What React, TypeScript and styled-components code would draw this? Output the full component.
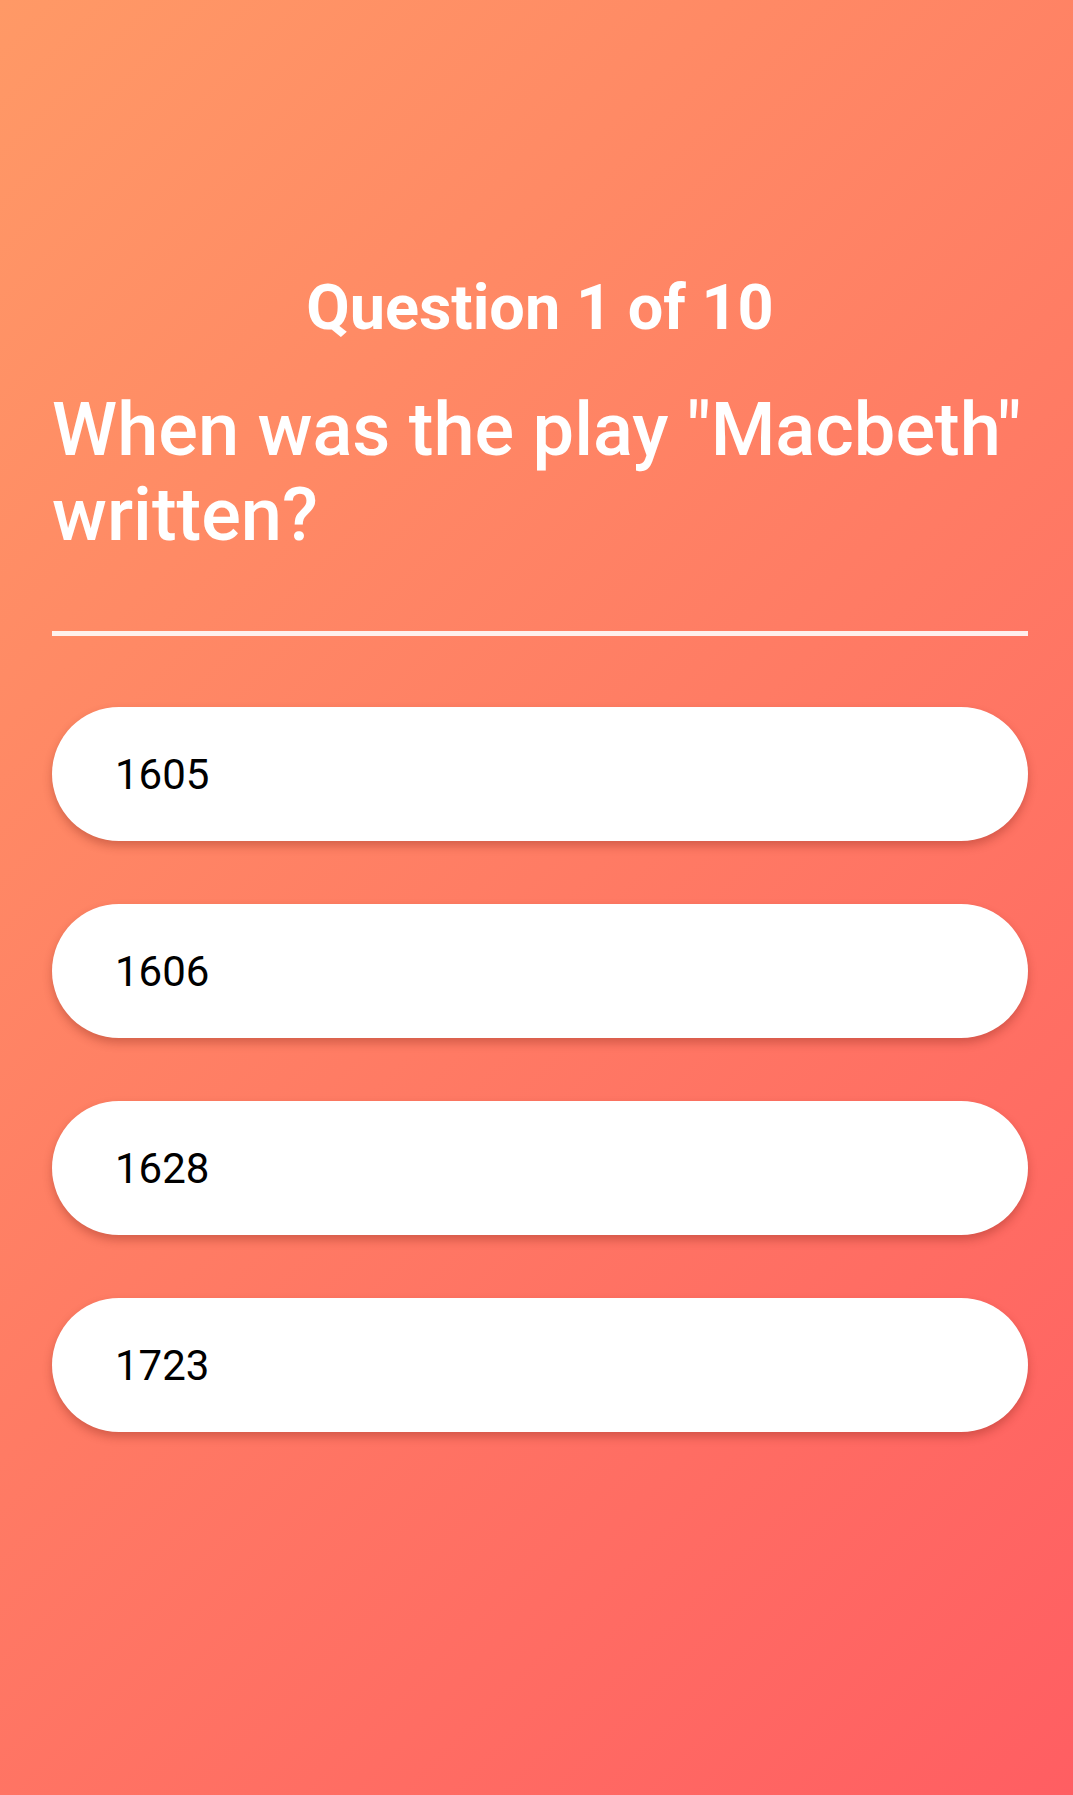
import React from "react";
import styled, { createGlobalStyle } from "styled-components";

const GlobalStyle = createGlobalStyle`
  html, body {
    margin: 0;
    padding: 0;
  }
  body {
    font-family: Roboto, "Liberation Sans", Arial, sans-serif;
    -webkit-font-smoothing: antialiased;
  }
  * { box-sizing: border-box; }
`;

const Screen = styled.main`
  min-height: 1795px;
  width: 100%;
  background: linear-gradient(135deg, #ff9966 0%, #ff5e62 100%);
  padding: 270px 45px 0 52px;
  display: flex;
  flex-direction: column;
`;

const Counter = styled.h2`
  margin: 0;
  font-family: Roboto, "Liberation Sans", sans-serif;
  font-weight: 700;
  font-size: 63px;
  line-height: 76px;
  color: #ffffff;
  text-align: center;
`;

const QuestionText = styled.h1`
  margin: 41px 0 0;
  font-family: Roboto, "Liberation Sans", sans-serif;
  font-weight: 500;
  font-size: 74px;
  line-height: 85px;
  color: #ffffff;
`;

const Divider = styled.hr`
  margin: 74px 0 0;
  border: none;
  height: 5px;
  background: rgba(255, 255, 255, 0.88);
`;

const Answers = styled.ul`
  list-style: none;
  margin: 71px 0 0;
  padding: 0;
  display: flex;
  flex-direction: column;
  gap: 63px;
`;

const AnswerButton = styled.button`
  width: 100%;
  height: 134px;
  border: none;
  border-radius: 67px;
  background: #ffffff;
  box-shadow: 0 5px 10px rgba(120, 30, 20, 0.32);
  display: flex;
  align-items: center;
  padding: 0 0 0 63px;
  font-family: Roboto, "Liberation Sans", sans-serif;
  font-weight: 400;
  font-size: 42px;
  color: #000000;
  text-align: left;
  cursor: pointer;
`;

const answers = ["1605", "1606", "1628", "1723"];

export default function App() {
  return (
    <>
      <GlobalStyle />
      <Screen>
        <Counter>Question 1 of 10</Counter>
        <QuestionText>When was the play "Macbeth" written?</QuestionText>
        <Divider />
        <Answers>
          {answers.map((a) => (
            <li key={a}>
              <AnswerButton>{a}</AnswerButton>
            </li>
          ))}
        </Answers>
      </Screen>
    </>
  );
}
